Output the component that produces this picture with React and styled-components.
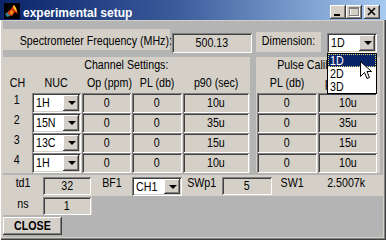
import React from "react";
import styled, { createGlobalStyle, css } from "styled-components";

const FACE = "#d4d0c8";
const FIG = "#b4b4b4";
const FONT = `"Liberation Sans", Arial, sans-serif`;

const Global = createGlobalStyle`
  html, body { margin: 0; padding: 0; background: ${FACE}; }
  body { width: 386px; height: 240px; overflow: hidden; font-family: ${FONT}; font-size: 13px; color: #000; }
`;

const raised = css`
  box-shadow: inset -1px -1px #404040, inset 1px 1px #ffffff, inset -2px -2px #808080, inset 2px 2px ${FACE};
`;
const sunken = css`
  box-shadow: inset 1px 1px #808080, inset -1px -1px #ffffff, inset 2px 2px #404040, inset -2px -2px ${FACE};
`;

/* narrow system-font look: Arial metrics squeezed horizontally */
const T = styled.span`
  display: inline-block;
  white-space: nowrap;
  transform: scaleX(0.82);
  transform-origin: ${(p) => (p.$left ? "left center" : "center center")};
`;

const Window = styled.div`
  position: relative;
  width: 386px;
  height: 240px;
  box-sizing: border-box;
  background: ${FACE};
  display: flex;
  flex-direction: column;
  box-shadow: inset 1px 0 #ffffff, inset -1px -1px #404040, inset -2px -2px #808080;
`;

const TitleBar = styled.div`
  height: 20px;
  flex: none;
  display: flex;
  align-items: flex-end;
  padding: 0 6px 0 4px;
  background: linear-gradient(to right, #0a246a 0%, #3a5a9a 45%, #a6caf0 100%);
`;

const AppIcon = styled.svg`
  width: 16px;
  height: 16px;
  margin-bottom: 1px;
  flex: none;
`;

const TitleText = styled.span`
  margin-left: 3px;
  font-family: "Liberation Sans", Arial, sans-serif;
  font-weight: bold;
  font-size: 12px;
  line-height: 14px;
  color: #ffffff;
  white-space: nowrap;
`;

const CaptionButtons = styled.div`
  margin-left: auto;
  margin-bottom: 1px;
  display: flex;
`;

const CaptionButton = styled.div`
  width: 16px;
  height: 14px;
  background: ${FACE};
  ${raised};
  margin-left: ${(p) => p.$gap || 0}px;
  display: flex;
  svg { display: block; }
`;

const Client = styled.div`
  flex: 1;
  margin: 1px 3px 3px 3px;
  background: ${FIG};
  padding-top: 8px;
  display: flex;
  flex-direction: column;
`;

const TopRow = styled.div`
  display: flex;
  align-items: flex-start;
  height: 24px;
`;

const LabelPanel = styled.div`
  width: ${(p) => p.$w}px;
  height: ${(p) => p.$h}px;
  margin-left: ${(p) => p.$ml || 0}px;
  margin-top: ${(p) => p.$mt || 0}px;
  background: ${FACE};
  text-align: center;
  line-height: 15px;
  padding-top: ${(p) => p.$pt || 0}px;
  box-sizing: border-box;
  white-space: nowrap;
`;

const EditBox = styled.div`
  width: ${(p) => (p.$w ? `${p.$w}px` : "auto")};
  height: ${(p) => p.$h || 20}px;
  margin-left: ${(p) => p.$ml || 0}px;
  margin-top: ${(p) => p.$mt || 0}px;
  background: ${FACE};
  ${sunken};
  text-align: center;
  line-height: ${(p) => p.$h || 20}px;
  box-sizing: border-box;
  white-space: nowrap;
`;

const Popup = styled.div`
  position: relative;
  width: ${(p) => (p.$w ? `${p.$w}px` : "auto")};
  height: ${(p) => p.$h || 20}px;
  margin-left: ${(p) => p.$ml || 0}px;
  margin-top: ${(p) => p.$mt || 0}px;
  background: #ffffff;
  ${sunken};
  box-sizing: border-box;
  display: flex;
  align-items: stretch;
  padding: 2px;
`;

const PopupText = styled.span`
  flex: 1;
  padding-left: 2px;
  line-height: ${(p) => (p.$h || 20) - 4}px;
  white-space: nowrap;
  overflow: hidden;
`;

const ArrowButton = styled.div`
  width: 16px;
  flex: none;
  background: ${FACE};
  ${raised};
  display: flex;
  align-items: center;
  justify-content: center;
  &::after {
    content: "";
    border-left: 4px solid transparent;
    border-right: 4px solid transparent;
    border-top: 4px solid #000;
    margin-left: 1px;
  }
`;

const DropList = styled.div`
  position: absolute;
  left: 0;
  top: 100%;
  width: 50px;
  box-sizing: border-box;
  border: 1px solid #000000;
  background: #ffffff;
  z-index: 5;
`;

const DropItem = styled.div`
  height: 13px;
  line-height: 13px;
  padding-left: 2px;
  ${(p) =>
    p.$selected &&
    css`
      background: #0a246a;
      color: #ffffff;
      outline: 1px dotted #e0e080;
      outline-offset: -1px;
    `}
`;

const SettingsRow = styled.div`
  display: flex;
  margin-top: 4px;
  height: 116px;
`;

const Panel = styled.div`
  width: ${(p) => p.$w}px;
  margin-left: ${(p) => p.$ml || 0}px;
  background: ${FACE};
  box-sizing: border-box;
  padding-left: ${(p) => p.$pl || 0}px;
`;

const PanelTitle = styled.div`
  height: 16px;
  line-height: 16px;
  text-align: center;
  white-space: nowrap;
`;

const Grid = styled.div`
  display: grid;
  grid-template-columns: ${(p) => p.$cols};
  grid-auto-rows: 20px;
  column-gap: 1px;
`;

const HeaderCell = styled.div`
  line-height: 20px;
  text-align: center;
  white-space: nowrap;
`;

const ChCell = styled.div`
  line-height: 13px;
  text-align: center;
`;

const BottomBlock = styled.div`
  margin-top: 2px;
  display: flex;
  flex-direction: column;
  align-items: flex-start;
`;

const TdRow = styled.div`
  align-self: stretch;
  height: 21px;
  background: ${FACE};
  display: flex;
  align-items: flex-start;
`;

const NsRow = styled.div`
  width: 89px;
  height: 19px;
  background: ${FACE};
  display: flex;
  align-items: flex-start;
`;

const FieldLabel = styled.div`
  width: ${(p) => p.$w}px;
  flex: none;
  text-align: center;
  line-height: 13px;
  padding-top: 1px;
  white-space: nowrap;
`;

const CloseButton = styled.div`
  margin-top: 2px;
  width: 59px;
  height: 18px;
  background: ${FACE};
  ${raised};
  font-weight: bold;
  text-align: center;
  line-height: 18px;
`;

const Cursor = styled.svg`
  position: absolute;
  left: 360px;
  top: 61px;
  width: 12px;
  height: 19px;
  z-index: 10;
`;

const channelRows = [
  { ch: "1", nuc: "1H", op: "0", pl: "0", p90: "10u", cpl: "0", cp90: "10u" },
  { ch: "2", nuc: "15N", op: "0", pl: "0", p90: "35u", cpl: "0", cp90: "35u" },
  { ch: "3", nuc: "13C", op: "0", pl: "0", p90: "15u", cpl: "0", cp90: "15u" },
  { ch: "4", nuc: "1H", op: "0", pl: "0", p90: "10u", cpl: "0", cp90: "10u" },
];

export default function App() {
  return (
    <>
      <Global />
      <Window>
        <TitleBar>
          <AppIcon viewBox="0 0 16 16">
            <rect x="0" y="0" width="16" height="16" fill="#000" />
            <polygon points="1,11 5,8 8,9 6,13 3,14" fill="#1f8fa0" />
            <polygon points="3,10 7,6 10,2 12,5 14,11 11,9 8,13 5,12" fill="#d83a10" />
            <polygon points="9,4 10,2 12,5 13,9 11,7" fill="#f8d020" />
            <polygon points="6,9 8,7 9,10 7,12" fill="#f0a020" />
          </AppIcon>
          <TitleText>experimental setup</TitleText>
          <CaptionButtons>
            <CaptionButton>
              <svg width="16" height="14" viewBox="0 0 16 14">
                <rect x="4" y="9" width="6" height="2" fill="#000" />
              </svg>
            </CaptionButton>
            <CaptionButton>
              <svg width="16" height="14" viewBox="0 0 16 14">
                <rect x="4.5" y="3.5" width="9" height="8" fill="none" stroke="#fff" />
                <rect x="3.5" y="2.5" width="9" height="8" fill="none" stroke="#808080" />
                <rect x="3" y="2" width="10" height="2" fill="#808080" />
              </svg>
            </CaptionButton>
            <CaptionButton $gap={2}>
              <svg width="16" height="14" viewBox="0 0 16 14">
                <path d="M4 3 L11 10 M11 3 L4 10" stroke="#000" strokeWidth="1.6" />
              </svg>
            </CaptionButton>
          </CaptionButtons>
        </TitleBar>

        <Client>
          <TopRow>
            <LabelPanel $w={167} $h={21} $pt={4}>
              <T>Spectrometer Frequency (MHz):</T>
            </LabelPanel>
            <EditBox $w={80} $ml={2} $mt={4}>
              <T>500.13</T>
            </EditBox>
            <LabelPanel $w={65} $h={20} $ml={4} $mt={3} $pt={1}>
              <T>Dimension:</T>
            </LabelPanel>
            <Popup $w={50} $ml={6} $mt={4}>
              <PopupText>
                <T $left>1D</T>
              </PopupText>
              <ArrowButton />
              <DropList>
                <DropItem $selected>
                  <T $left>1D</T>
                </DropItem>
                <DropItem>
                  <T $left>2D</T>
                </DropItem>
                <DropItem>
                  <T $left>3D</T>
                </DropItem>
              </DropList>
            </Popup>
          </TopRow>

          <SettingsRow>
            <Panel $w={247}>
              <PanelTitle>
                <T>Channel Settings:</T>
              </PanelTitle>
              <Grid $cols="28px 49px 49px 50px 66px">
                <HeaderCell><T>CH</T></HeaderCell>
                <HeaderCell><T>NUC</T></HeaderCell>
                <HeaderCell><T>Op (ppm)</T></HeaderCell>
                <HeaderCell><T>PL (db)</T></HeaderCell>
                <HeaderCell><T>p90 (sec)</T></HeaderCell>
                {channelRows.map((r) => (
                  <React.Fragment key={r.ch}>
                    <ChCell><T>{r.ch}</T></ChCell>
                    <Popup>
                      <PopupText>
                        <T $left>{r.nuc}</T>
                      </PopupText>
                      <ArrowButton />
                    </Popup>
                    <EditBox><T>{r.op}</T></EditBox>
                    <EditBox><T>{r.pl}</T></EditBox>
                    <EditBox><T>{r.p90}</T></EditBox>
                  </React.Fragment>
                ))}
              </Grid>
            </Panel>
            <Panel $w={124} $ml={6} $pl={1}>
              <PanelTitle>
                <T>Pulse Calibration:</T>
              </PanelTitle>
              <Grid $cols="60px 59px">
                <HeaderCell><T>PL (db)</T></HeaderCell>
                <HeaderCell><T>p90 (sec)</T></HeaderCell>
                {channelRows.map((r) => (
                  <React.Fragment key={r.ch}>
                    <EditBox><T>{r.cpl}</T></EditBox>
                    <EditBox><T>{r.cp90}</T></EditBox>
                  </React.Fragment>
                ))}
              </Grid>
            </Panel>
          </SettingsRow>

          <BottomBlock>
            <TdRow>
              <FieldLabel $w={40}><T>td1</T></FieldLabel>
              <EditBox $w={48} $h={18} $mt={2}><T>32</T></EditBox>
              <FieldLabel $w={41}><T>BF1</T></FieldLabel>
              <Popup $w={50} $h={19} $mt={2}>
                <PopupText $h={19}>
                  <T $left>CH1</T>
                </PopupText>
                <ArrowButton />
              </Popup>
              <FieldLabel $w={40}><T>SWp1</T></FieldLabel>
              <EditBox $w={50} $h={18} $mt={2}><T>5</T></EditBox>
              <FieldLabel $w={40}><T>SW1</T></FieldLabel>
              <FieldLabel $w={69}><T>2.5007k</T></FieldLabel>
            </TdRow>
            <NsRow>
              <FieldLabel $w={40}><T>ns</T></FieldLabel>
              <EditBox $w={48} $h={18} $mt={1}><T>1</T></EditBox>
            </NsRow>
            <CloseButton>
              <T>CLOSE</T>
            </CloseButton>
          </BottomBlock>
        </Client>

        <Cursor viewBox="0 0 12 19">
          <path
            d="M0.5 0.5 L0.5 15.5 L4.5 11.5 L7 17.5 L9.5 16.5 L7 10.5 L11.5 10.5 Z"
            fill="#fff"
            stroke="#000"
            strokeWidth="1"
          />
        </Cursor>
      </Window>
    </>
  );
}
